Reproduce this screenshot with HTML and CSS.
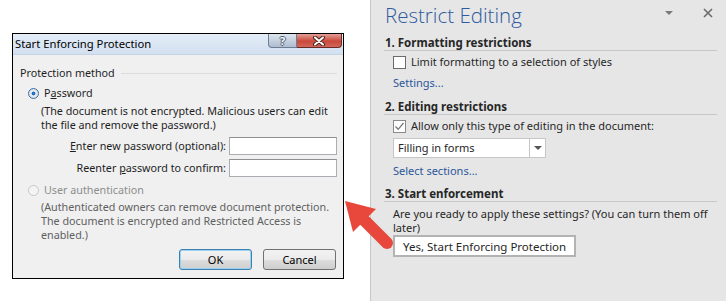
FILE: index.html
```html
<!DOCTYPE html>
<html lang="en">
<head>
    <meta charset="UTF-8">
    <meta name="viewport" content="width=device-width, initial-scale=1.0">
    <title>Restrict Editing</title>
    <link rel="stylesheet" href="styles.css">
</head>
<body>
    <div class="screen">
        <div class="doc-area">
            <div class="dialog">
                <div class="titlebar">
                    <span class="title">Start Enforcing Protection</span>
                    <div class="caption-buttons">
                        <span class="cap-btn help">?</span>
                        <span class="cap-btn close">
                            <svg width="14" height="10" viewBox="0 0 14 10">
                                <path d="M3 1.5 L11 8.5 M11 1.5 L3 8.5" stroke="#4a2320" stroke-width="4" stroke-linecap="round"/>
                                <path d="M3 1.5 L11 8.5 M11 1.5 L3 8.5" stroke="#fff" stroke-width="2" stroke-linecap="round"/>
                            </svg>
                        </span>
                    </div>
                </div>

                <div class="dialog-body">
                    <div class="group-header"><span>Protection method</span></div>

                    <div class="radio-row">
                        <span class="radio checked"></span>
                        <span>P<u>a</u>ssword</span>
                    </div>
                    <p class="note">(The document is not encrypted. Malicious users can edit<br>the file and remove the password.)</p>

                    <div class="field-row">
                        <span class="field-label"><u>E</u>nter new password (optional):</span>
                        <span class="textbox"></span>
                    </div>
                    <div class="field-row">
                        <span class="field-label">Reenter <u>p</u>assword to confirm:</span>
                        <span class="textbox"></span>
                    </div>

                    <div class="radio-row disabled">
                        <span class="radio"></span>
                        <span>User authentication</span>
                    </div>
                    <p class="note muted">(Authenticated owners can remove document protection.<br>The document is encrypted and Restricted Access is<br>enabled.)</p>

                    <div class="dialog-buttons">
                        <button class="btn default">OK</button>
                        <button class="btn">Cancel</button>
                    </div>
                </div>
            </div>
        </div>

        <div class="pane">
            <div class="pane-header">
                <h1>Restrict Editing</h1>
                <span class="pane-menu"></span>
                <span class="pane-close">
                    <svg width="10" height="10" viewBox="0 0 10 10">
                        <path d="M1 1 L9 9 M9 1 L1 9" stroke="#6a6a6a" stroke-width="1.6"/>
                    </svg>
                </span>
            </div>

            <h2>1. Formatting restrictions</h2>
            <div class="check-row">
                <span class="checkbox"></span>
                <span>Limit formatting to a selection of styles</span>
            </div>
            <a class="pane-link first">Settings...</a>

            <h2 class="section">2. Editing restrictions</h2>
            <div class="check-row">
                <span class="checkbox checked">
                    <svg width="11" height="11" viewBox="0 0 11 11">
                        <path d="M1.5 5.5 L4.2 8.3 L9.5 2" fill="none" stroke="#7a7a7a" stroke-width="1.3"/>
                    </svg>
                </span>
                <span>Allow only this type of editing in the document:</span>
            </div>
            <div class="combo">
                <span class="combo-value">Filling in forms</span>
                <span class="combo-arrow"></span>
            </div>
            <a class="pane-link">Select sections...</a>

            <h2 class="section last">3. Start enforcement</h2>
            <p class="pane-text">Are you ready to apply these settings? (You can turn them off<br>later)</p>
            <button class="enforce-btn">Yes, Start Enforcing Protection</button>
        </div>

        <svg class="callout-arrow" width="726" height="301" viewBox="0 0 726 301">
            <line x1="364" y1="220" x2="387" y2="243" stroke="#e8473c" stroke-width="12" stroke-linecap="round"/>
            <polygon points="345,201 376,209 353,232" fill="#e8473c"/>
        </svg>
    </div>
</body>
</html>
```

FILE: styles.css
```css
body {
    margin: 0;
    font-family: "Segoe UI", "Noto Sans", sans-serif;
    font-size: 11px;
    color: #1e1e1e;
}
.screen {
    position: relative;
    display: flex;
    width: 726px;
    height: 301px;
    overflow: hidden;
    background-color: #fff;
}
.doc-area {
    width: 370px;
    flex-shrink: 0;
    padding: 33px 0 0 12px;
    box-sizing: border-box;
}

/* dialog */
.dialog {
    width: 332px;
    border: 1px solid #000;
    background-color: #f0f0f0;
    box-sizing: border-box;
    font-size: 10.75px;
}
.titlebar {
    display: flex;
    align-items: flex-start;
    height: 20px;
    background: linear-gradient(#e4edf8, #d3e0f0);
    border-bottom: 1px solid #c5d3e4;
}
.title {
    padding: 2px 0 0 2px;
    line-height: 16px;
    font-size: 11.25px;
    color: #000;
}
.caption-buttons {
    display: flex;
    margin-left: auto;
    margin-right: 1px;
}
.cap-btn {
    display: flex;
    align-items: center;
    justify-content: center;
    height: 14px;
    box-sizing: border-box;
}
.help {
    width: 29px;
    border: 1px solid #6e7d92;
    border-top: none;
    border-radius: 0 0 0 4px;
    background: linear-gradient(#dde5ee, #aebdd0);
    color: #fff;
    font-weight: bold;
    font-size: 11px;
    line-height: 12px;
    text-shadow: 1px 0 #4b5a70, -1px 0 #4b5a70, 0 1px #4b5a70, 0 -1px #4b5a70;
}
.close {
    width: 45px;
    border: 1px solid #6b2a24;
    border-top: none;
    border-left: none;
    border-radius: 0 0 4px 0;
    background: linear-gradient(#e4a198, #c9493c 55%, #d2675b);
}
.dialog-body {
    padding: 10px 6px 8px 7px;
}
.group-header {
    display: flex;
    align-items: center;
    gap: 6px;
    line-height: 16px;
}
.group-header::after {
    content: "";
    flex: 1;
    height: 1px;
    background-color: #dcdcdc;
}
.radio-row {
    display: flex;
    align-items: center;
    gap: 5px;
    margin: 4px 0 0 8px;
    line-height: 16px;
}
.radio {
    width: 11px;
    height: 11px;
    border: 1px solid #8e8f8f;
    border-radius: 50%;
    background: radial-gradient(circle, #f4f4f4 30%, #d8d8d8);
    box-sizing: border-box;
}
.radio.checked {
    background: radial-gradient(circle, #2c8ad8 0, #1e5fa7 28%, #e9eef4 34%, #cfd6dd);
    border-color: #3d6fa6;
}
.radio-row.disabled {
    color: #8d8d8d;
    margin-top: 5px;
}
.radio-row.disabled .radio {
    border-color: #c8c8c8;
    background: #f4f4f4;
}
.note {
    margin: 3px 0 0 21px;
    line-height: 14px;
}
.note.muted {
    margin-top: 2px;
    color: #5f5f5f;
}
.field-row {
    display: flex;
    align-items: center;
    justify-content: flex-end;
    gap: 3px;
    margin-top: 5px;
}
.field-row + .field-row {
    margin-top: 4px;
}
.textbox {
    width: 108px;
    height: 18px;
    border: 1px solid #abadb3;
    border-top-color: #8e8f8f;
    background-color: #fff;
    box-sizing: border-box;
}
.dialog-buttons {
    display: flex;
    justify-content: flex-end;
    gap: 11px;
    margin-top: 7px;
    padding-right: 1px;
}
.btn {
    width: 73px;
    height: 21px;
    padding: 0;
    border: 1px solid #707070;
    border-radius: 3px;
    background: linear-gradient(#f2f2f2, #ebebeb 50%, #dddddd 51%, #cfcfcf);
    font-family: inherit;
    font-size: 11px;
    color: #000;
}
.btn.default {
    border-color: #3c7fb1;
    box-shadow: inset 0 0 0 1px #9ad2ef;
}

/* task pane */
.pane {
    flex: 1;
    border-left: 1px solid #c6c6c6;
    background-color: #e6e6e6;
    padding: 0 9px 0 13px;
    color: #262626;
}
.pane-header {
    display: flex;
    align-items: center;
    height: 32px;
}
.pane-header h1 {
    margin: 0 0 0 1px;
    font-family: "Segoe UI Light", "Open Sans", sans-serif;
    font-weight: 300;
    font-size: 20.5px;
    line-height: 28px;
    color: #2e5a9e;
    position: relative;
    top: -1px;
}
.pane-menu {
    margin: 0 0 6px auto;
    width: 0;
    height: 0;
    border-left: 4px solid transparent;
    border-right: 4px solid transparent;
    border-top: 4px solid #7a7a7a;
}
.pane-close {
    display: flex;
    margin: 0 4px 6px 30px;
}
h2 {
    margin: 3px 0 0;
    padding-left: 1px;
    font-size: 11.5px;
    font-weight: bold;
    line-height: 15px;
    border-bottom: 1px solid #c6c6c6;
}
h2.section {
    margin-top: 8px;
}
h2.last {
    margin-top: 7px;
}
.check-row {
    display: flex;
    align-items: center;
    gap: 5px;
    margin: 3px 0 0 9px;
    line-height: 16px;
}
.checkbox {
    display: flex;
    align-items: center;
    justify-content: center;
    width: 13px;
    height: 13px;
    border: 1px solid #6b6b6b;
    background-color: #fff;
    box-sizing: border-box;
}
.checkbox.checked {
    border-color: #8a8a8a;
}
.check-row + .combo {
    margin-top: 4px;
}
.pane-link {
    display: block;
    margin: 5px 0 0 9px;
    line-height: 16px;
    color: #2b579a;
}
.combo {
    display: flex;
    width: 153px;
    height: 20px;
    margin-left: 9px;
    border: 1px solid #c6c6c6;
    background-color: #fff;
    box-sizing: border-box;
}
.combo-value {
    flex: 1;
    padding-left: 4px;
    line-height: 18px;
}
.combo-arrow {
    width: 15px;
    border-left: 1px solid #c6c6c6;
    display: flex;
    align-items: center;
    justify-content: center;
}
.combo-arrow::before {
    content: "";
    border-left: 4px solid transparent;
    border-right: 4px solid transparent;
    border-top: 4px solid #555;
}
.pane-text {
    margin: 5px 0 0 9px;
    line-height: 14px;
}
.enforce-btn {
    display: block;
    margin-left: 9px;
    height: 22px;
    padding: 0 8px;
    border: 2px solid #b3b3b3;
    background-color: #fff;
    font-family: inherit;
    font-size: 11.5px;
    color: #262626;
}

.callout-arrow {
    position: absolute;
    left: 0;
    top: 0;
    pointer-events: none;
}
```
